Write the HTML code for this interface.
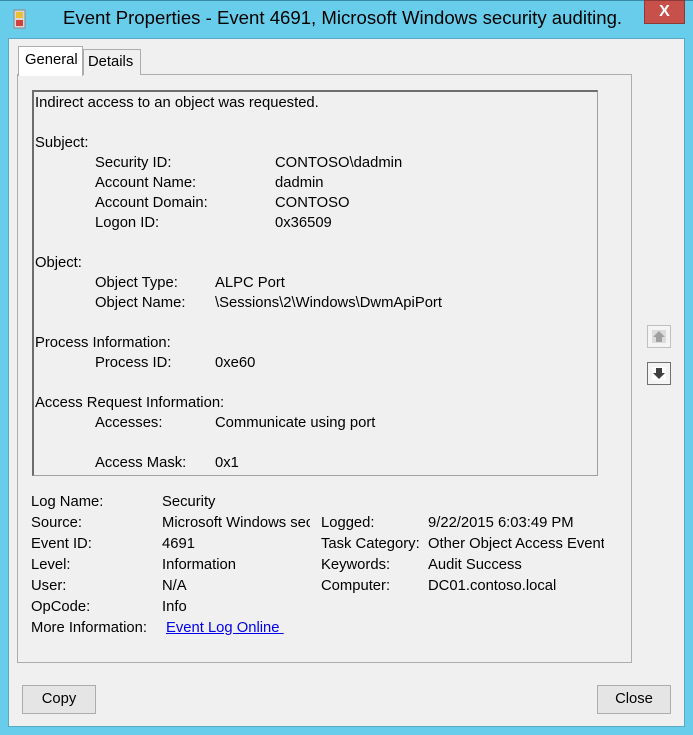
<!DOCTYPE html>
<html><head><style>
*{margin:0;padding:0;box-sizing:border-box}
body{width:693px;height:735px;background:#68cdeb;font-family:"Liberation Sans",sans-serif;font-size:14.8px;color:#000;position:relative;overflow:hidden}
.abs{position:absolute;white-space:nowrap}
#client{position:absolute;left:8px;top:38px;width:677px;height:689px;background:#f0f0f0;border:1px solid #5aa9c4}
.t{position:absolute;white-space:nowrap;line-height:20px}
</style></head><body>
<div class="abs" style="left:0;top:0;width:693px;height:1px;background:#3a8aaa"></div>
<svg class="abs" style="left:13px;top:9px" width="14" height="20"><rect x="1" y="1" width="11" height="18" fill="#d8d8d8" stroke="#888"/><rect x="3" y="3" width="7" height="6" fill="#e8c030"/><rect x="3" y="11" width="7" height="6" fill="#d04040"/></svg>
<div class="abs" style="left:63px;top:7px;font-size:18.6px;color:#000">Event Properties - Event 4691, Microsoft Windows security auditing.</div>
<div class="abs" style="left:644px;top:0;width:41px;height:24px;background:#c7504b;border:1px solid #8d3a36;color:#fff;font-weight:bold;font-size:16px;text-align:center;line-height:22px">X</div>
<div id="client"></div>
<div class="abs" style="left:17px;top:74px;width:615px;height:589px;border:1px solid #adadad;background:#f0f0f0"></div>
<div class="abs" style="left:83px;top:49px;width:58px;height:26px;border:1px solid #adadad;border-bottom:none;background:#f0f0f0;padding:4px 0 0 4px">Details</div>
<div class="abs" style="left:18px;top:46px;width:65px;height:30px;border:1px solid #adadad;border-bottom:none;background:#fff;padding:5px 0 0 6px">General</div>
<div class="abs" style="left:32px;top:90px;width:566px;height:386px;border:1px solid #a0a0a0;border-left:2px solid #6d6d6d;border-top:2px solid #6d6d6d;background:#f0f0f0"></div>
<div class="t" style="left:35px;top:93px">Indirect access to an object was requested.</div>
<div class="t" style="left:35px;top:133px">Subject:</div>
<div class="t" style="left:95px;top:153px">Security ID:</div><div class="t" style="left:275px;top:153px">CONTOSO\dadmin</div>
<div class="t" style="left:95px;top:173px">Account Name:</div><div class="t" style="left:275px;top:173px">dadmin</div>
<div class="t" style="left:95px;top:193px">Account Domain:</div><div class="t" style="left:275px;top:193px">CONTOSO</div>
<div class="t" style="left:95px;top:213px">Logon ID:</div><div class="t" style="left:275px;top:213px">0x36509</div>
<div class="t" style="left:35px;top:253px">Object:</div>
<div class="t" style="left:95px;top:273px">Object Type:</div><div class="t" style="left:215px;top:273px">ALPC Port</div>
<div class="t" style="left:95px;top:293px">Object Name:</div><div class="t" style="left:215px;top:293px">\Sessions\2\Windows\DwmApiPort</div>
<div class="t" style="left:35px;top:333px">Process Information:</div>
<div class="t" style="left:95px;top:353px">Process ID:</div><div class="t" style="left:215px;top:353px">0xe60</div>
<div class="t" style="left:35px;top:393px">Access Request Information:</div>
<div class="t" style="left:95px;top:413px">Accesses:</div><div class="t" style="left:215px;top:413px">Communicate using port</div>
<div class="t" style="left:95px;top:453px">Access Mask:</div><div class="t" style="left:215px;top:453px">0x1</div>
<div class="abs" style="left:647px;top:325px;width:24px;height:23px;border:1px solid #c0c0c0;background:#f4f4f4"><svg width="22" height="21"><rect x="4" y="4" width="14" height="13" fill="#dcdcdc"/><path d="M11 5 L17 11 H14 V16 H8 V11 H5 Z" fill="#a0a0a0"/></svg></div>
<div class="abs" style="left:647px;top:362px;width:24px;height:23px;border:1px solid #707070;background:#f4f4f4"><svg width="22" height="21"><rect x="4" y="4" width="14" height="13" fill="#fff"/><path d="M8 5 H14 V10 H17 L11 16 L5 10 H8 Z" fill="#404040"/></svg></div>
<div class="t" style="left:31px;top:492px">Log Name:</div><div class="t" style="left:162px;top:492px">Security</div>
<div class="t" style="left:31px;top:513px">Source:</div><div class="t" style="left:162px;top:513px;width:148px;overflow:hidden">Microsoft Windows security</div>
<div class="t" style="left:321px;top:513px">Logged:</div><div class="t" style="left:428px;top:513px">9/22/2015 6:03:49 PM</div>
<div class="t" style="left:31px;top:534px">Event ID:</div><div class="t" style="left:162px;top:534px">4691</div>
<div class="t" style="left:321px;top:534px">Task Category:</div><div class="t" style="left:428px;top:534px;width:176px;overflow:hidden">Other Object Access Events</div>
<div class="t" style="left:31px;top:555px">Level:</div><div class="t" style="left:162px;top:555px">Information</div>
<div class="t" style="left:321px;top:555px">Keywords:</div><div class="t" style="left:428px;top:555px">Audit Success</div>
<div class="t" style="left:31px;top:576px">User:</div><div class="t" style="left:162px;top:576px">N/A</div>
<div class="t" style="left:321px;top:576px">Computer:</div><div class="t" style="left:428px;top:576px">DC01.contoso.local</div>
<div class="t" style="left:31px;top:597px">OpCode:</div><div class="t" style="left:162px;top:597px">Info</div>
<div class="t" style="left:31px;top:618px">More Information:</div><div class="t" style="left:166px;top:618px;color:#0000ee;text-decoration:underline">Event Log Online&nbsp;</div>
<div class="abs" style="left:22px;top:685px;width:74px;height:29px;border:1px solid #adadad;background:#e5e5e5;text-align:center;line-height:27px">Copy</div>
<div class="abs" style="left:597px;top:685px;width:74px;height:29px;border:1px solid #adadad;background:#e5e5e5;text-align:center;line-height:27px">Close</div>
</body></html>
